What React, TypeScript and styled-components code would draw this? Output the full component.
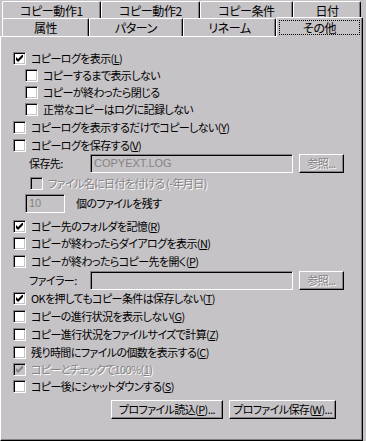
import styled, { createGlobalStyle, css } from 'styled-components'

const FACE = '#c6c3c6'
const SHADOW = '#848284'

const GlobalStyle = createGlobalStyle`
  html, body {
    margin: 0;
    padding: 0;
    background: ${FACE};
  }
`

const Dialog = styled.div`
  width: 366px;
  height: 441px;
  overflow: hidden;
  background: ${FACE};
  color: #000;
  font-family: "Noto Sans CJK JP", "Noto Sans", sans-serif;
  font-size: 11px;
  letter-spacing: -0.6px;
  font-feature-settings: "palt";
  line-height: 1;
`

const TabStrip = styled.div`
  display: flex;
  flex-direction: column;
  height: 36px;
  padding-top: 1px;
  box-sizing: border-box;
  font-size: 12px;
  letter-spacing: -0.4px;
`

const TabRow = styled.div<{ $h: number }>`
  display: flex;
  align-items: flex-end;
  height: ${(p) => p.$h}px;
  padding-left: 2px;
`

const Tab = styled.div<{ $w: number; $active?: boolean }>`
  width: ${(p) => p.$w}px;
  height: 18px;
  flex: none;
  box-sizing: border-box;
  display: flex;
  align-items: center;
  justify-content: center;
  background: ${FACE};
  border-top: 1px solid #fff;
  border-left: 1px solid #fff;
  border-right: 1px solid #000;
  border-radius: 2px 2px 0 0;
  box-shadow: inset -1px 0 0 ${SHADOW};
  ${(p) =>
    p.$active &&
    css`
      height: 20px;
      margin-bottom: -1px;
      position: relative;
      z-index: 1;
    `}
`

const Focus = styled.span`
  display: flex;
  align-items: center;
  justify-content: center;
  width: calc(100% - 4px);
  height: 15px;
  box-sizing: border-box;
  border: 1px dotted #000;
`

const Panel = styled.div`
  width: 363px;
  height: 405px;
  box-sizing: border-box;
  border-top: 1px solid #fff;
  border-left: 1px solid #fff;
  border-right: 1px solid #000;
  border-bottom: 1px solid #000;
  box-shadow: inset -1px -1px 0 ${SHADOW};
  padding: 13px 0 0 12px;
  display: flex;
  flex-direction: column;
`

const Row = styled.div<{ $h: number; $indent?: number; $gap?: number }>`
  display: flex;
  align-items: center;
  height: ${(p) => p.$h}px;
  padding-left: ${(p) => p.$indent ?? 0}px;
  margin-top: ${(p) => p.$gap ?? 0}px;
  flex: none;
`

const Box = styled.span<{ $disabled?: boolean }>`
  width: 13px;
  height: 13px;
  flex: none;
  box-sizing: border-box;
  display: flex;
  align-items: center;
  justify-content: center;
  border: 1px solid;
  border-color: ${SHADOW} #fff #fff ${SHADOW};
  box-shadow: inset 1px 1px 0 #000, inset -1px -1px 0 ${FACE};
  background: ${(p) => (p.$disabled ? FACE : '#fff')};
  margin-right: 5px;
`

const Label = styled.span<{ $disabled?: boolean }>`
  white-space: nowrap;
  ${(p) =>
    p.$disabled &&
    css`
      color: ${SHADOW};
      text-shadow: 1px 1px 0 #fff;
    `}
`

const FieldLabel = styled.span<{ $w: number }>`
  width: ${(p) => p.$w}px;
  flex: none;
  white-space: nowrap;
`

const Field = styled.div<{ $w: number; $disabled?: boolean }>`
  width: ${(p) => p.$w}px;
  height: 19px;
  flex: none;
  box-sizing: border-box;
  display: flex;
  align-items: center;
  padding-left: 3px;
  border: 1px solid;
  border-color: ${SHADOW} #fff #fff ${SHADOW};
  box-shadow: inset 1px 1px 0 #000, inset -1px -1px 0 ${FACE};
  background: ${(p) => (p.$disabled ? FACE : '#fff')};
  color: ${(p) => (p.$disabled ? SHADOW : '#000')};
  font-family: "Liberation Sans", "Noto Sans CJK JP", sans-serif;
  letter-spacing: 0;
`

const Button = styled.div<{ $w: number; $disabled?: boolean }>`
  width: ${(p) => p.$w}px;
  height: 19px;
  flex: none;
  box-sizing: border-box;
  display: flex;
  align-items: center;
  justify-content: center;
  white-space: nowrap;
  border: 1px solid;
  border-color: #fff #000 #000 #fff;
  box-shadow: inset -1px -1px 0 ${SHADOW};
  background: ${FACE};
  margin-left: 6px;
  ${(p) =>
    p.$disabled &&
    css`
      color: ${SHADOW};
      text-shadow: 1px 1px 0 #fff;
    `}
`

const ButtonRow = styled.div`
  display: flex;
  margin-top: 5px;
  padding-left: 92px;
`

const Tick = ({ color }: { color: string }) => (
  <svg width="7" height="7" viewBox="0 0 7 7">
    <polygon points="0,2 2,4 7,-1 7,2 2,7 0,5" fill={color} />
  </svg>
)

// "&X" marks the mnemonic letter, drawn underlined
const Mnemonic = ({ text }: { text: string }) => {
  const i = text.indexOf('&')
  if (i < 0) return <>{text}</>
  return (
    <>
      {text.slice(0, i)}
      <u>{text[i + 1]}</u>
      {text.slice(i + 2)}
    </>
  )
}

type CheckProps = {
  label: string
  checked?: boolean
  disabled?: boolean
  h: number
  indent?: number
  gap?: number
}

const Check = ({ label, checked, disabled, h, indent, gap }: CheckProps) => (
  <Row $h={h} $indent={indent} $gap={gap}>
    <Box $disabled={disabled}>{checked && <Tick color={disabled ? SHADOW : '#000'} />}</Box>
    <Label $disabled={disabled}>
      <Mnemonic text={label} />
    </Label>
  </Row>
)

export default function App() {
  return (
    <Dialog>
      <GlobalStyle />
      <TabStrip>
        <TabRow $h={18}>
          <Tab $w={99}>コピー動作1</Tab>
          <Tab $w={99}>コピー動作2</Tab>
          <Tab $w={93}>コピー条件</Tab>
          <Tab $w={68}>日付</Tab>
        </TabRow>
        <TabRow $h={17}>
          <Tab $w={87}>属性</Tab>
          <Tab $w={94}>パターン</Tab>
          <Tab $w={93}>リネーム</Tab>
          <Tab $w={87} $active>
            <Focus>その他</Focus>
          </Tab>
        </TabRow>
      </TabStrip>
      <Panel>
        <Check h={17} checked label="コピーログを表示(&L)" />
        <Check h={17} indent={12} label="コピーするまで表示しない" />
        <Check h={17} indent={12} label="コピーが終わったら閉じる" />
        <Check h={17} indent={12} label="正常なコピーはログに記録しない" />
        <Check h={18} label="コピーログを表示するだけでコピーしない(&Y)" />
        <Check h={18} label="コピーログを保存する(&V)" />
        <Row $h={19} $indent={16}>
          <FieldLabel $w={61}>保存先:</FieldLabel>
          <Field $w={203} $disabled>COPYEXT.LOG</Field>
          <Button $w={45} $disabled>参照...</Button>
        </Row>
        <Check h={20} indent={17} disabled label="ファイル名に日付を付ける (-年月日)" />
        <Row $h={20} $indent={12}>
          <Field $w={40} $disabled>10</Field>
          <Label style={{ marginLeft: 11 }}>個のファイルを残す</Label>
        </Row>
        <Check h={18} gap={4} checked label="コピー先のフォルダを記憶(&R)" />
        <Check h={17} label="コピーが終わったらダイアログを表示(&N)" />
        <Check h={18} label="コピーが終わったらコピー先を開く(&P)" />
        <Row $h={20} $indent={16}>
          <FieldLabel $w={61}>ファイラー:</FieldLabel>
          <Field $w={203} $disabled />
          <Button $w={45} $disabled>参照...</Button>
        </Row>
        <Check h={17} checked label="OKを押してもコピー条件は保存しない(&T)" />
        <Check h={18} label="コピーの進行状況を表示しない(&G)" />
        <Check h={18} label="コピー進行状況をファイルサイズで計算(&Z)" />
        <Check h={18} label="残り時間にファイルの個数を表示する(&C)" />
        <Check h={17} checked disabled label="コピーとチェックで100%(&1)" />
        <Check h={17} label="コピー後にシャットダウンする(&S)" />
        <ButtonRow>
          <Button $w={112}>
            <span>
              プロファイル読込(<u>P</u>)...
            </span>
          </Button>
          <Button $w={107}>
            <span>
              プロファイル保存(<u>W</u>)...
            </span>
          </Button>
        </ButtonRow>
      </Panel>
    </Dialog>
  )
}
